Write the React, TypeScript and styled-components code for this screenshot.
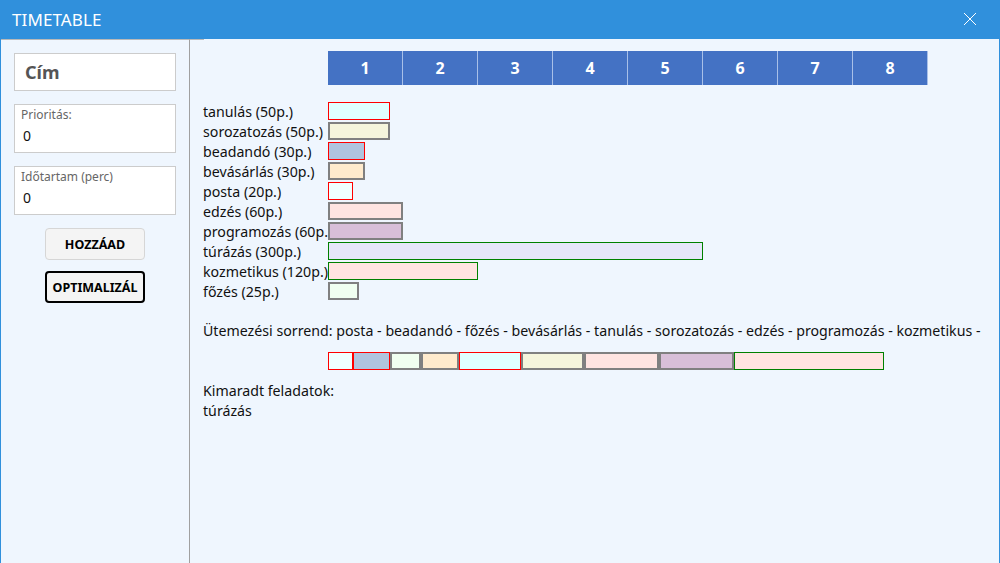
import React from 'react'
import styled, { createGlobalStyle } from 'styled-components'

const GlobalStyle = createGlobalStyle`
  html, body { margin: 0; padding: 0; }
  body {
    font-family: "Segoe UI", "Noto Sans", "Liberation Sans", sans-serif;
    background: #eff6fe;
  }
`

interface Task {
  name: string
  min: number
  bg: string
  border: string
}

const PX = 1.25

const tasks: Task[] = [
  { name: 'tanulás', min: 50, bg: '#e0ffff', border: '#ff0000' },
  { name: 'sorozatozás', min: 50, bg: '#f5f5dc', border: '#808080' },
  { name: 'beadandó', min: 30, bg: '#b0c4de', border: '#ff0000' },
  { name: 'bevásárlás', min: 30, bg: '#ffebcd', border: '#808080' },
  { name: 'posta', min: 20, bg: '#f0ffff', border: '#ff0000' },
  { name: 'edzés', min: 60, bg: '#ffe4e1', border: '#808080' },
  { name: 'programozás', min: 60, bg: '#d8bfd8', border: '#808080' },
  { name: 'túrázás', min: 300, bg: '#e6e6fa', border: '#008000' },
  { name: 'kozmetikus', min: 120, bg: '#ffe4e1', border: '#008000' },
  { name: 'főzés', min: 25, bg: '#f0fff0', border: '#808080' },
]

const order = ['posta', 'beadandó', 'főzés', 'bevásárlás', 'tanulás', 'sorozatozás', 'edzés', 'programozás', 'kozmetikus']

const find = (n: string) => tasks.find(t => t.name === n)!

// pixel widths from the cumulative start/end so rounding does not add up
const scheduled = (() => {
  let cum = 0
  return order.map(o => {
    const t = find(o)
    const start = Math.floor(cum * PX)
    cum += t.min
    return { t, w: Math.floor(cum * PX) - start }
  })
})()

const App: React.FC = () => {
  return (
    <Window>
      <GlobalStyle />
      <TitleBar>
        <Title>TIMETABLE</Title>
        <Close>
          <svg width="14" height="14" viewBox="0 0 14 14">
            <path d="M1 1 L13 13 M13 1 L1 13" stroke="#fff" strokeWidth="1" />
          </svg>
        </Close>
      </TitleBar>
      <Body>
        <Sidebar>
          <TitleField>Cím</TitleField>
          <Field>
            <FieldLabel>Prioritás:</FieldLabel>
            <FieldValue>0</FieldValue>
          </Field>
          <Field>
            <FieldLabel>Időtartam (perc)</FieldLabel>
            <FieldValue>0</FieldValue>
          </Field>
          <Button>HOZZÁAD</Button>
          <Button primary>OPTIMALIZÁL</Button>
        </Sidebar>
        <Main>
          <Hours>
            {[1, 2, 3, 4, 5, 6, 7, 8].map(h => (
              <Hour key={h}>{h}</Hour>
            ))}
          </Hours>
          <TaskList>
            {tasks.map(t => (
              <TaskRow key={t.name}>
                <TaskLabel>{t.name} ({t.min}p.)</TaskLabel>
                <Block bg={t.bg} bc={t.border} style={{ width: Math.floor(t.min * PX) }} />
              </TaskRow>
            ))}
          </TaskList>
          <Text>Ütemezési sorrend: {order.map(o => o + ' - ').join('')}</Text>
          <Schedule>
            {scheduled.map(({ t, w }) => (
              <Block key={t.name} bg={t.bg} bc={t.border} style={{ width: w }} />
            ))}
          </Schedule>
          <Text>Kimaradt feladatok:</Text>
          <Text>túrázás</Text>
        </Main>
      </Body>
    </Window>
  )
}

export default App

const Window = styled.div`
  width: 1000px;
  height: 563px;
  display: flex;
  flex-direction: column;
  box-sizing: border-box;
  border-left: 1px solid #3090dc;
  border-right: 1px solid #3090dc;
  background: #eff6fe;
  overflow: hidden;
`

const TitleBar = styled.div`
  height: 39px;
  flex: none;
  background: #3090dc;
  display: flex;
  align-items: center;
  justify-content: space-between;
  padding: 0 22px 0 11px;
`

const Title = styled.div`
  color: #fff;
  font-size: 17px;
  letter-spacing: 0.1px;
`

const Close = styled.div`
  display: flex;
  align-items: center;
  margin-top: -2px;
`

const Body = styled.div`
  flex: 1;
  display: flex;
`

const Sidebar = styled.div`
  width: 189px;
  flex: none;
  box-sizing: border-box;
  border-top: 1px solid #b9b9b9;
  border-right: 1px solid #a0a0a0;
  padding: 13px 0 0 13px;
  display: flex;
  flex-direction: column;
`

const TitleField = styled.div`
  width: 162px;
  height: 38px;
  box-sizing: border-box;
  border: 1px solid #cccccc;
  background: #fff;
  font-size: 18px;
  font-weight: bold;
  color: #555;
  display: flex;
  align-items: center;
  padding-left: 10px;
  margin-bottom: 13px;
`

const Field = styled.div`
  width: 162px;
  height: 49px;
  box-sizing: border-box;
  border: 1px solid #cccccc;
  background: #fff;
  padding: 2px 0 0 6px;
  margin-bottom: 13px;
`

const FieldLabel = styled.div`
  font-size: 12px;
  color: #666;
  line-height: 16px;
`

const FieldValue = styled.div`
  font-size: 14px;
  color: #111;
  line-height: 20px;
  margin-top: 3px;
  padding-left: 2px;
`

const Button = styled.div<{ primary?: boolean }>`
  width: 100px;
  height: 32px;
  margin: 0 0 11px 31px;
  box-sizing: border-box;
  border: ${p => (p.primary ? '2px solid #000' : '1px solid #d6d6d6')};
  border-radius: 4px;
  background: #f4f4f4;
  font-size: 12.5px;
  font-weight: bold;
  color: #000;
  display: flex;
  align-items: center;
  justify-content: center;
`

const Main = styled.div`
  flex: 1;
  padding: 12px 0 0 13px;
  background: linear-gradient(#b9b9b9, #b9b9b9) no-repeat 0 0 / 14px 1px;
  font-size: 14.2px;
  color: #111;
`

const Hours = styled.div`
  display: flex;
  margin-left: 125px;
  margin-bottom: 16px;
`

const Hour = styled.div`
  width: 75px;
  height: 34px;
  box-sizing: border-box;
  background: #4472c4;
  border-right: 1px solid #a9c0e8;
  color: #fff;
  font-weight: bold;
  font-size: 16px;
  display: flex;
  align-items: center;
  justify-content: center;
`

const TaskList = styled.div`
  display: flex;
  flex-direction: column;
  margin-bottom: 20px;
`

const TaskRow = styled.div`
  display: flex;
  align-items: center;
  height: 20px;
`

const TaskLabel = styled.div`
  width: 125px;
  flex: none;
  white-space: nowrap;
  overflow: visible;
`

const Block = styled.div<{ bg: string; bc: string }>`
  height: 18px;
  box-sizing: border-box;
  background: ${p => p.bg};
  border: ${p => (p.bc === '#808080' ? '2px' : '1px')} solid ${p => p.bc};
  flex: none;
`

const Text = styled.div`
  line-height: 20px;
  white-space: nowrap;
`

const Schedule = styled.div`
  display: flex;
  margin: 11px 0 11px 125px;
`
